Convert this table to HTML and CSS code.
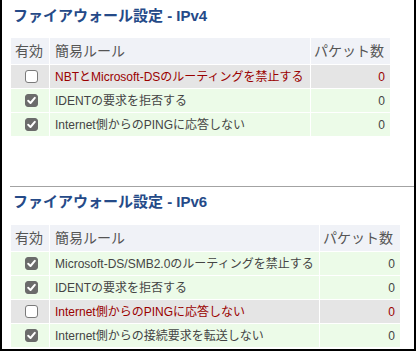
FILE: index.html
```html
<!DOCTYPE html>
<html lang="ja">
<head>
<meta charset="utf-8">
<title>ファイアウォール設定</title>
<link rel="stylesheet" href="styles.css">
</head>
<body>
<div class="frame">
  <section class="fw fw-v4">
    <h2 class="fw-title">ファイアウォール設定 - IPv4</h2>
    <table class="rules rules-v4">
      <colgroup><col class="col-en"><col class="col-rule"><col class="col-cnt"></colgroup>
      <thead>
        <tr><th class="h-en">有効</th><th class="h-rule">簡易ルール</th><th class="h-cnt">パケット数</th></tr>
      </thead>
      <tbody>
        <tr class="off"><td class="c-en"><span class="cb"></span></td><td class="c-rule">NBTとMicrosoft-DSのルーティングを禁止する</td><td class="c-cnt">0</td></tr>
        <tr class="on"><td class="c-en"><span class="cb cb-on"><svg viewBox="0 0 13 13" width="13" height="13"><path d="M3.2 6.8 L5.5 9 L9.8 3.8" fill="none" stroke="#fff" stroke-width="2" stroke-linecap="round" stroke-linejoin="round"/></svg></span></td><td class="c-rule">IDENTの要求を拒否する</td><td class="c-cnt">0</td></tr>
        <tr class="on"><td class="c-en"><span class="cb cb-on"><svg viewBox="0 0 13 13" width="13" height="13"><path d="M3.2 6.8 L5.5 9 L9.8 3.8" fill="none" stroke="#fff" stroke-width="2" stroke-linecap="round" stroke-linejoin="round"/></svg></span></td><td class="c-rule">Internet側からのPINGに応答しない</td><td class="c-cnt">0</td></tr>
      </tbody>
    </table>
  </section>
  <section class="fw fw-v6">
    <h2 class="fw-title">ファイアウォール設定 - IPv6</h2>
    <table class="rules rules-v6">
      <colgroup><col class="col-en"><col class="col-rule"><col class="col-cnt"></colgroup>
      <thead>
        <tr><th class="h-en">有効</th><th class="h-rule">簡易ルール</th><th class="h-cnt">パケット数</th></tr>
      </thead>
      <tbody>
        <tr class="on"><td class="c-en"><span class="cb cb-on"><svg viewBox="0 0 13 13" width="13" height="13"><path d="M3.2 6.8 L5.5 9 L9.8 3.8" fill="none" stroke="#fff" stroke-width="2" stroke-linecap="round" stroke-linejoin="round"/></svg></span></td><td class="c-rule">Microsoft-DS/SMB2.0のルーティングを禁止する</td><td class="c-cnt">0</td></tr>
        <tr class="on"><td class="c-en"><span class="cb cb-on"><svg viewBox="0 0 13 13" width="13" height="13"><path d="M3.2 6.8 L5.5 9 L9.8 3.8" fill="none" stroke="#fff" stroke-width="2" stroke-linecap="round" stroke-linejoin="round"/></svg></span></td><td class="c-rule">IDENTの要求を拒否する</td><td class="c-cnt">0</td></tr>
        <tr class="off"><td class="c-en"><span class="cb"></span></td><td class="c-rule">Internet側からのPINGに応答しない</td><td class="c-cnt">0</td></tr>
        <tr class="on"><td class="c-en"><span class="cb cb-on"><svg viewBox="0 0 13 13" width="13" height="13"><path d="M3.2 6.8 L5.5 9 L9.8 3.8" fill="none" stroke="#fff" stroke-width="2" stroke-linecap="round" stroke-linejoin="round"/></svg></span></td><td class="c-rule">Internet側からの接続要求を転送しない</td><td class="c-cnt">0</td></tr>
      </tbody>
    </table>
  </section>
</div>
</body>
</html>
```
FILE: styles.css
```css
html, body {
  margin: 0;
  padding: 0;
  background: #fff;
}
.frame {
  width: 416px;
  height: 351px;
  box-sizing: border-box;
  border-left: 2px solid #000;
  border-right: 2px solid #000;
  border-bottom: 2px solid #000;
  padding-left: 8px;
  font-family: "Liberation Sans", "Noto Sans CJK JP", sans-serif;
  overflow: hidden;
}
.fw-v4 {
  padding-top: 6px;
  height: 186px;
  box-sizing: border-box;
}
.fw-v6 {
  border-top: 1px solid #a3a3a3;
  padding-top: 5px;
}
.fw-title {
  margin: 0 0 11px 3px;
  font-size: 15px;
  line-height: 20px;
  font-weight: bold;
  color: #254a88;
}
.fw-v6 .fw-title {
  margin-bottom: 12px;
}
.rules {
  border-collapse: separate;
  border-spacing: 1px;
  table-layout: fixed;
}
.rules-v4 { width: 381px; }
.rules-v6 { width: 391px; }
.col-en { width: 38px; }
.col-cnt { width: 79px; }
.rules-v4 .col-rule { width: 260px; }
.rules-v6 .col-rule { width: 269px; }
.rules-v6 .col-cnt { width: 80px; }
.rules th {
  height: 26px;
  padding: 0;
  background: #f0f2f7;
  color: #555;
  font-size: 14px;
  font-weight: normal;
  line-height: 18px;
  text-align: left;
  white-space: nowrap;
}
.rules .h-en { padding-left: 4px; }
.rules .h-rule { padding-left: 5px; }
.rules .h-cnt { padding-left: 3px; }
.rules td {
  height: 23px;
  padding: 0;
  font-size: 12px;
  line-height: 16px;
  color: #444;
  white-space: nowrap;
}
.rules tr.on td { background: #ecfbe8; }
.rules tr.off td { background: #e5e5e5; color: #9a0000; }
.c-rule { padding-left: 5px !important; }
.c-cnt { text-align: right; padding-right: 5px !important; }
.cb {
  display: block;
  width: 13px;
  height: 13px;
  margin: 0 auto;
  box-sizing: border-box;
  border: 1px solid #7a7a7a;
  border-radius: 3px;
  background: #fff;
  position: relative;
  left: 1px;
}
.cb-on {
  border-color: #6b6b6b;
  background: #6b6b6b;
}
.cb svg {
  display: block;
  margin: -1px;
}
```
